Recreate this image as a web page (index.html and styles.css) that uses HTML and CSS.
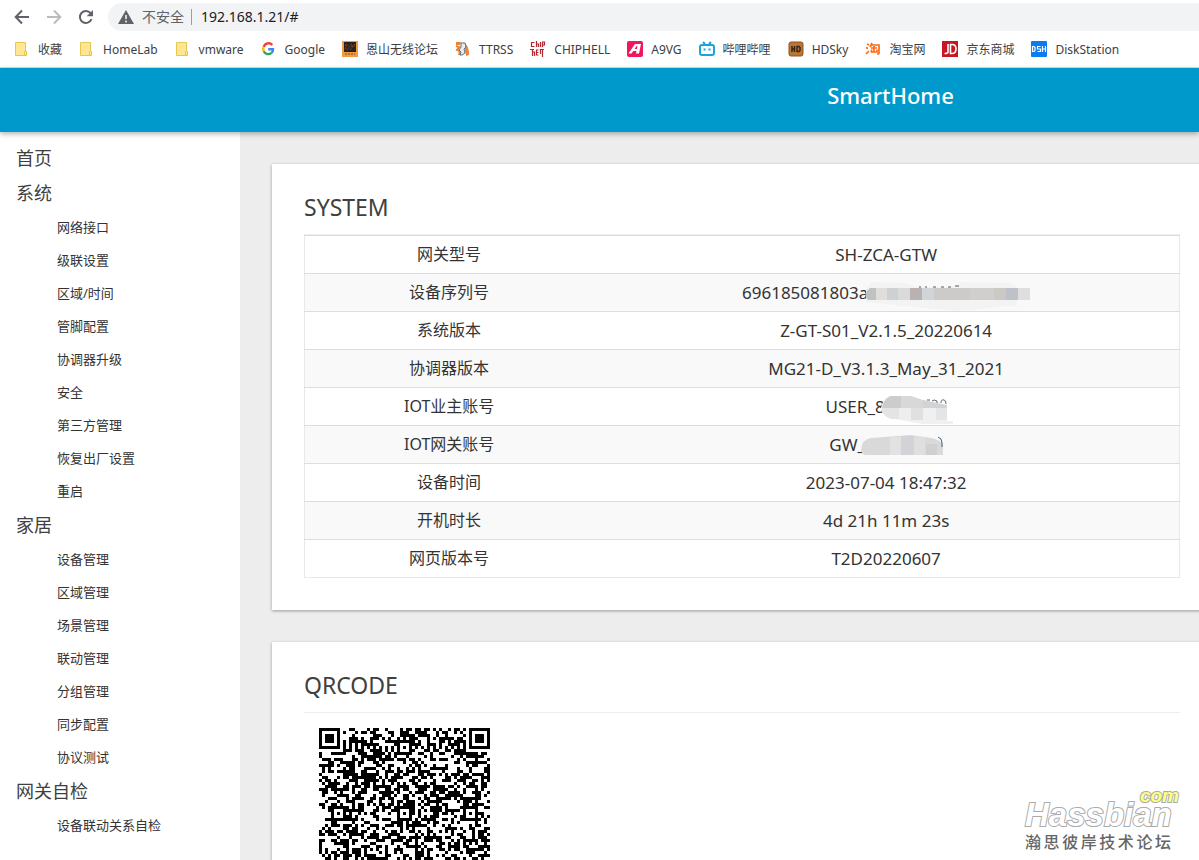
FILE: index.html
```html
<!DOCTYPE html>
<html lang="zh-CN">
<head>
<meta charset="utf-8">
<title>SmartHome</title>
<link rel="stylesheet" href="styles.css">
</head>
<body>
<div class="toolbar">
  <button class="tool" aria-label="Back"><svg viewBox="0 0 16 16" width="16" height="16"><path d="M15 8H2M8 1.5 1.7 8 8 14.500" fill="none" stroke="#5f6368" stroke-width="2"/></svg></button>
  <button class="tool" aria-label="Forward"><svg viewBox="0 0 16 16" width="16" height="16"><path d="M1 8h13M8 1.500 14.300 8 8 14.500" fill="none" stroke="#babcbe" stroke-width="2"/></svg></button>
  <button class="tool" aria-label="Reload"><svg viewBox="0 0 16 16" width="16" height="16"><path d="M13.500 10.200A6 6 0 1 1 12.600 4.200" fill="none" stroke="#5f6368" stroke-width="2"/><path d="M15 1v6.300H8.700z" fill="#5f6368"/></svg></button>
  <div class="omnibox">
    <svg viewBox="0 0 16 14" width="16" height="14"><path d="M8 0 16 14H0z" fill="#5f6368"/><path d="M8 5v4M8 10.500v2" stroke="#f1f3f4" stroke-width="1.600"/></svg>
    <span class="insecure">不安全</span>
    <input class="url" aria-label="Address" value="192.168.1.21/#">
  </div>
</div>
<nav class="bookmarks" aria-label="Bookmarks">
  <a href="#"><svg viewBox="0 0 16 16"><path d="M1.500 1.500h10v9h1v4h-11z" fill="#ffe694" stroke="#e8c751"/><path d="M10.500 14v-3.500h2V14z" fill="#fff0b8" stroke="#e8c751"/></svg><span>收藏</span></a>
  <a href="#"><svg viewBox="0 0 16 16"><path d="M1.500 1.500h10v9h1v4h-11z" fill="#ffe694" stroke="#e8c751"/><path d="M10.500 14v-3.500h2V14z" fill="#fff0b8" stroke="#e8c751"/></svg><span>HomeLab</span></a>
  <a href="#"><svg viewBox="0 0 16 16"><path d="M1.500 1.500h10v9h1v4h-11z" fill="#ffe694" stroke="#e8c751"/><path d="M10.500 14v-3.500h2V14z" fill="#fff0b8" stroke="#e8c751"/></svg><span>vmware</span></a>
  <a href="#"><svg viewBox="0 0 16 16"><g fill="none" stroke-width="2.400"><path d="M11.300 4A5 5 0 0 0 2.700 5.800" stroke="#ea4335"/><path d="M2.700 5.800a5 5 0 0 0 0 4.400" stroke="#fbbc05"/><path d="M2.700 10.200a5 5 0 0 0 7.800 1.700" stroke="#34a853"/><path d="M10.500 11.900A4.500 4.500 0 0 0 12 8.200H7.200" stroke="#4285f4"/></g></svg><span>Google</span></a>
  <a href="#"><svg viewBox="0 0 16 16"><path d="M0 0h16v16H0z" fill="#f29a3f"/><path d="M2 1h12v10H2z" fill="#2b2118"/><path d="M3 8l3-5M5 9l5-7M8 9l5-6M3 4h3M9 5h4M3 13h10" stroke="#7b512a" stroke-dasharray="2 1"/></svg><span>恩山无线论坛</span></a>
  <a href="#"><svg viewBox="0 0 16 16"><path d="M1 1h5l-1 3H1zM9 2q5 2 5 12l-3 1-1-6z" fill="#f08135"/><path d="M1 5l3 1-2 3 3 1-1 4" fill="none" stroke="#f08135" stroke-width="2"/><path d="M6 2h4l1 4-2 2 1 4-3 2H5l1-3-2-2 2-3z" fill="#e8edf0" stroke="#587184"/></svg><span>TTRSS</span></a>
  <a href="#"><svg viewBox="0 0 16 16"><path d="M4.500 1.500h-3v4h3M6.500 0v6M6.500 3h2v3M10.500 1v5M12.500 6V1h2v3h-2M2.500 8v7M2.500 11h2v4M8.500 9h-2v5h2M6.500 11.500h2M10.500 8v5M12.500 8v8M0 8.500h4M10 8.500h4" fill="none" stroke="#b1272d" stroke-width="1.200"/></svg><span>CHIPHELL</span></a>
  <a href="#"><svg viewBox="0 0 16 16"><rect width="16" height="16" rx="2" fill="#f0185c"/><path d="M1.500 12.500 8 3h6l-2 9.500H9l.5-2.500H6.300l-1.800 2.500zM7.500 8h2.400l.5-2.800H9.300z" fill="#fff" fill-rule="evenodd"/></svg><span>A9VG</span></a>
  <a href="#"><svg viewBox="0 0 16 16"><rect x="1" y="4" width="14" height="10" rx="2" fill="none" stroke="#17a5dc" stroke-width="2"/><path d="M4 1l2 2M12 1l-2 2M5.500 7.500v2M10.500 7.500v2" stroke="#17a5dc" stroke-width="2"/></svg><span>哔哩哔哩</span></a>
  <a href="#"><svg viewBox="0 0 16 16"><rect x="1" y="1" width="14" height="14" rx="2" fill="#b87534" stroke="#8b5424"/><path d="M4 5v6M6.500 5v6M4 8h2.500M9 5v6M9 5.500h2l1 1v3l-1 1H9" fill="none" stroke="#332015" stroke-width="1.400"/></svg><span>HDSky</span></a>
  <a href="#"><svg viewBox="0 0 16 16"><path d="M2 3l2 1M1 6.500l2 1M1 13l3-3M7 2 5 6M6.500 4H14v8q0 1-2 1M6 7h6M9 5v6M6.500 8.500V11H12V8.500" fill="none" stroke="#ff6a13" stroke-width="1.700"/></svg><span>淘宝网</span></a>
  <a href="#"><svg viewBox="0 0 16 16"><path d="M0 0h16v16H0z" fill="#c91623"/><path d="M6 3v8q0 1.500-3.500 1.500M8.500 3.500v9H10q4 0 4-4.500t-4-4.500z" fill="none" stroke="#fff" stroke-width="1.600"/></svg><span>京东商城</span></a>
  <a href="#"><svg viewBox="0 0 16 16"><rect width="16" height="16" rx="1" fill="#087cf0"/><path d="M1.500 5.500v5H3l1-1v-3l-1-1zM9.500 5.500h-3V8h3v2.500h-3M11.500 5v6M14.500 5v6M11.500 8h3" fill="none" stroke="#fff" stroke-width="1.200"/></svg><span>DiskStation</span></a>
</nav>
<header class="banner"><h1>SmartHome</h1></header>
<div class="app">
  <nav class="sidebar" aria-label="Menu">
    <a class="section" href="#">首页</a>
    <a class="section" href="#">系统</a>
    <ul>
      <li><a href="#">网络接口</a></li><li><a href="#">级联设置</a></li><li><a href="#">区域/时间</a></li><li><a href="#">管脚配置</a></li><li><a href="#">协调器升级</a></li><li><a href="#">安全</a></li><li><a href="#">第三方管理</a></li><li><a href="#">恢复出厂设置</a></li><li><a href="#">重启</a></li>
    </ul>
    <a class="section" href="#">家居</a>
    <ul>
      <li><a href="#">设备管理</a></li><li><a href="#">区域管理</a></li><li><a href="#">场景管理</a></li><li><a href="#">联动管理</a></li><li><a href="#">分组管理</a></li><li><a href="#">同步配置</a></li><li><a href="#">协议测试</a></li>
    </ul>
    <a class="section" href="#">网关自检</a>
    <ul><li><a href="#">设备联动关系自检</a></li></ul>
  </nav>
  <main class="content">
    <section class="card">
      <h2>SYSTEM</h2>
      <table>
        <tr><th scope="row">网关型号</th><td>SH-ZCA-GTW</td></tr>
        <tr><th scope="row">设备序列号</th><td>696185081803a<span class="masked"><svg viewBox="0 1 166 30" width="166" height="30"><path d="M2 8 8 1 40 2 52 6H95V1l50 1 8 4v18L95 30 60 27 2 21z" fill="#f3f3f3"/><path d="M6 7h12v12H4q-6-6 2-12z" fill="#bfc2c3"/><path d="M12 7h11v12H12z" fill="#e0dddb"/><path d="M23 7h11v12H23z" fill="#cfd0d2"/><path d="M34 7h12v12H34z" fill="#dadada"/><path d="M46 7h12v12H46z" fill="#b9b2b0"/><path d="M58 7h12v12H58z" fill="#d1d5da"/><path d="M70 7h36v12H70z" fill="#cccbc9"/><path d="M106 7h24v12h-24z" fill="#d1cfcd"/><path d="M130 7h12v12h-12z" fill="#ccc8c4"/><path d="M142 7h12v12h-12z" fill="#bec1ca"/><path d="M154 7h12v12h-12z" fill="#dedede"/><path d="M55 6h2M61 6h2M69 6h3M77 6h3M84 6h3M91 5h4" stroke="#555"/></svg></span></td></tr>
        <tr><th scope="row">系统版本</th><td>Z-GT-S01_V2.1.5_20220614</td></tr>
        <tr><th scope="row">协调器版本</th><td>MG21-D_V3.1.3_May_31_2021</td></tr>
        <tr><th scope="row">IOT业主账号</th><td>USER_8<span class="masked"><svg viewBox="0 0 66 30" width="66" height="30"><path d="M0 12Q2 2 9 0l19 1 17 4 21 5v15l6 0v3l-30 0L8 22Q0 18 0 12z" fill="#f0f0f0"/><path d="M1 12h17v11H10Q0 19 1 12z" fill="#e4e4e4"/><path d="M1 12Q3 2 10 0h10v12z" fill="#ccc"/><path d="M20 0h10l12 4v8H20z" fill="#d8d8d8"/><path d="M42 4l24 5v3H42z" fill="#d1d3d7"/><path d="M18 12h12v11H18z" fill="#eee"/><path d="M30 12h12v12H30z" fill="#e0e0e0"/><path d="M55 12h11v12H55z" fill="#e4e5e7"/><path d="M46 4h3M51 5q2-2 5 0v2M60 7q0-4 3-3 2 0 2 4" fill="none" stroke="#666"/></svg></span></td></tr>
        <tr><th scope="row">IOT网关账号</th><td>GW_<span class="masked"><svg viewBox="0 0 82 30" width="82" height="30"><path d="M0 16Q1 5 10 4l40-3 20 3q7 1 12 6v11H4q-4-2-4-5z" fill="#d9d9d9"/><path d="M29 3h11v18H29z" fill="#e3e2e2"/><path d="M40 2h13v19H40z" fill="#d2d3d6"/><path d="M53 3h11v18H53z" fill="#dfdfdf"/><path d="M65 10h11v11H65z" fill="#d0d0d0"/><path d="M77 3q4 1 4 6v4" fill="none" stroke="#43617b"/></svg></span></td></tr>
        <tr><th scope="row">设备时间</th><td>2023-07-04 18:47:32</td></tr>
        <tr><th scope="row">开机时长</th><td>4d 21h 11m 23s</td></tr>
        <tr><th scope="row">网页版本号</th><td>T2D20220607</td></tr>
      </table>
    </section>
    <section class="card">
      <h2>QRCODE</h2>
      <div class="qr-area"><svg id="qr" role="img" aria-label="QR code" viewBox="0 0 57 57" width="171" height="171" shape-rendering="crispEdges"></svg></div>
    </section>
  </main>
</div>
<div class="watermark">
  <div class="tld">com</div>
  <div class="brand">Hassbian</div>
  <div class="forum">瀚思彼岸技术论坛</div>
</div>
<script src="qr.js"></script>
</body>
</html>
```
FILE: styles.css
```css
* { box-sizing: border-box; }
body {
  margin: 0;
  height: 100vh;
  overflow: hidden;
  display: flex;
  flex-direction: column;
  background: #fff;
  color: #333;
  font-family: "Noto Sans", "Noto Sans CJK SC", sans-serif;
}
a { color: inherit; text-decoration: none; }

.toolbar {
  flex: none;
  display: flex;
  align-items: center;
  gap: 16px;
  padding: 3px 0 0 14px;
}
.tool { display: flex; padding: 0; border: 0; background: none; }
.omnibox {
  flex: 1;
  display: flex;
  align-items: center;
  height: 28px;
  margin-left: -2px;
  padding-left: 10px;
  border-radius: 14px 0 0 14px;
  background: #f1f3f4;
}
.insecure {
  margin-left: 8px;
  padding-right: 7px;
  border-right: 1px solid #9a9da1;
  color: #5f6368;
  font-size: 14px;
  line-height: 16px;
}
.url {
  flex: 1;
  padding: 0 0 2px 9px;
  border: 0;
  outline: 0;
  background: none;
  color: #202124;
  font: 14px "Noto Sans", sans-serif;
}
.bookmarks {
  flex: none;
  display: flex;
  align-items: center;
  gap: 17px;
  height: 37px;
  padding-left: 14px;
  border-bottom: 1px solid #dadce0;
  color: #3c4043;
  font-size: 12px;
  white-space: nowrap;
}
.bookmarks a { display: flex; align-items: center; gap: 8px; }
.bookmarks svg { width: 16px; height: 16px; }

.banner {
  flex: none;
  z-index: 1;
  height: 64px;
  padding: 11px 0 0 582px;
  background: #09c;
  box-shadow: 0 2px 5px rgba(0, 0, 0, .3);
  color: #fff;
  text-align: center;
}
.banner h1 { margin: 0; font-size: 22px; line-height: 32px; font-weight: 500; }

.app { flex: 1; min-height: 0; display: flex; background: #ededed; }
.sidebar {
  flex: none;
  width: 240px;
  padding: 9px 16px;
  background: #fff;
  font-size: 13px;
  line-height: 33px;
}
.section { display: block; color: #404040; font-size: 18px; line-height: 35px; }
.sidebar ul { margin: 0; padding: 0 0 0 41px; list-style: none; }

.content { flex: 1; min-width: 0; overflow: hidden; padding: 32px 0 0 32px; }
.card {
  margin: 0 -13px 32px 0;
  padding: 24px 32px 32px;
  background: #fff;
  box-shadow: 0 1px 3px rgba(0, 0, 0, .35);
}
.card h2 {
  margin: 0;
  padding-bottom: 8px;
  border-bottom: 1px solid #eee;
  color: #404040;
  font-size: 23px;
  line-height: 38px;
  font-weight: 400;
}
table {
  width: 100%;
  table-layout: fixed;
  border-collapse: collapse;
  border: 1px solid #e8e8e8;
  font-size: 16px;
  line-height: 21px;
  text-align: center;
}
tr:nth-child(even) { background: #f9f9f9; }
th, td { height: 38px; padding: 8px; border-top: 1px solid #ddd; font-weight: 400; }
th { width: 33%; }
td { font-size: 17px; }
.masked {
  display: inline-block;
  height: 20px;
  margin-left: -4px;
  vertical-align: top;
}
.masked svg { display: block; overflow: visible; }
.qr-area { padding: 15px; }
.qr-area svg { display: block; }

.watermark {
  position: absolute;
  right: 20px;
  bottom: 6px;
  z-index: 2;
  width: 154px;
}
.brand, .tld {
  font-family: "Liberation Sans", sans-serif;
  font-style: italic;
  font-weight: bold;
  -webkit-text-stroke: 2px #aaa;
  paint-order: stroke fill;
}
.brand { color: #fff; font-size: 33px; line-height: 30px; }
.tld {
  margin-bottom: -3px;
  color: #ffff80;
  font-size: 19px;
  line-height: 14px;
  text-align: right;
}
.forum {
  width: 146px;
  color: #666;
  font-size: 16px;
  line-height: 24px;
  font-weight: 500;
  text-align: justify;
  text-align-last: justify;
  text-justify: inter-character;
}
```
FILE: qr.js
```js
// Draws a 57-module symbol: finders, timing and alignment marks over the data field.
const size = 57;
let seed = 20230704;
const next = () => (seed = (seed * 1103515245 + 12345) % 2147483648) / 2147483648;
const ring = (x, y, cx, cy, r) => Math.max(Math.abs(x - cx), Math.abs(y - cy)) <= r
  ? Math.max(Math.abs(x - cx), Math.abs(y - cy)) : -1;
let path = "";
for (let y = 0; y < size; y++) {
  for (let x = 0; x < size; x++) {
    let dark = next() < 0.5;
    if (x === 6 || y === 6) dark = (x + y) % 2 === 0;
    for (const cx of [6, 28, 50]) for (const cy of [6, 28, 50]) {
      const a = ring(x, y, cx, cy, 2);
      if (a >= 0) dark = a !== 1;
    }
    for (const [cx, cy] of [[3, 3], [53, 3], [3, 53]]) {
      const f = ring(x, y, cx, cy, 4);
      if (f >= 0) dark = f !== 2 && f !== 4;
    }
    if (dark) path += `M${x} ${y}h1v1h-1z`;
  }
}
document.getElementById("qr").innerHTML = `<path d="${path}"/>`;
```
